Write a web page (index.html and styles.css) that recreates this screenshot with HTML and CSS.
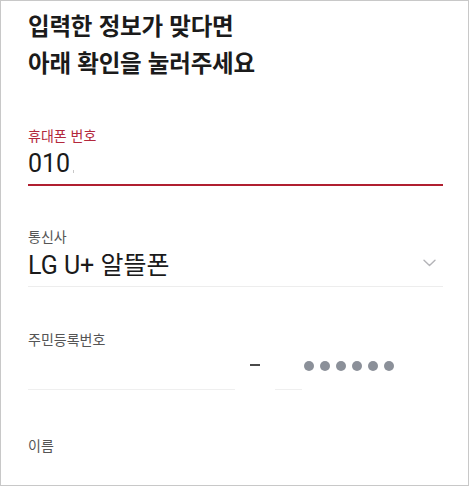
FILE: index.html
```html
<!DOCTYPE html>
<html lang="ko">
<head>
<meta charset="utf-8">
<link rel="stylesheet" href="styles.css">
</head>
<body>
<div class="page">
  <h1 class="title">입력한 정보가 맞다면<br>아래 확인을 눌러주세요</h1>

  <div class="field field-active">
    <div class="label label-active">휴대폰 번호</div>
    <div class="value-row row-active">
      <span class="value">010</span><span class="caret"></span>
    </div>
  </div>

  <div class="field field-carrier">
    <div class="label">통신사</div>
    <div class="value-row row-plain">
      <span class="value">LG U+ 알뜰폰</span>
      <svg class="chevron" width="13" height="8" viewBox="0 0 13 8"><path d="M1 1.2 L6.5 6.5 L12 1.2" fill="none" stroke="#b4b4b8" stroke-width="1.4" stroke-linecap="round" stroke-linejoin="round"/></svg>
    </div>
  </div>

  <div class="field field-rrn">
    <div class="label">주민등록번호</div>
    <div class="rrn-row">
      <div class="rrn-front"></div>
      <div class="rrn-dash"></div>
      <div class="rrn-back"></div>
      <div class="rrn-dots">
        <span class="dot"></span><span class="dot"></span><span class="dot"></span><span class="dot"></span><span class="dot"></span><span class="dot"></span>
      </div>
    </div>
  </div>

  <div class="field field-name">
    <div class="label">이름</div>
  </div>
</div>
</body>
</html>
```

FILE: styles.css
```css
html, body {
  margin: 0;
  padding: 0;
  background: #ffffff;
}

body {
  font-family: Roboto, "Noto Sans CJK KR", sans-serif;
  color: #1a1a1a;
}

.page {
  box-sizing: border-box;
  width: 469px;
  height: 486px;
  border: 1px solid #c8c8c8;
  padding: 6px 25px 0 27px;
  overflow: hidden;
}

.title {
  margin: 0;
  font-family: "Noto Sans CJK KR", sans-serif;
  font-size: 23.5px;
  font-weight: 700;
  line-height: 37px;
  letter-spacing: -0.2px;
  color: #1b1b1b;
}

.field-active { margin-top: 44px; }
.field-carrier { margin-top: 40px; }
.field-rrn { margin-top: 42px; }
.field-name { margin-top: 45px; }

.label {
  font-family: "Noto Sans CJK KR", sans-serif;
  font-size: 14px;
  line-height: 20px;
  color: #555555;
}

.label-active {
  color: #b3283c;
}

.value-row {
  display: flex;
  align-items: center;
  height: 30px;
  margin-top: 4px;
  padding-bottom: 5px;
}

.row-active {
  border-bottom: 2px solid #b01f30;
}

.row-plain {
  margin-top: 5px;
  border-bottom: 1px solid #ededed;
  justify-content: space-between;
}

.value {
  font-family: Roboto, "Noto Sans CJK KR", sans-serif;
  font-size: 25px;
  line-height: 30px;
  color: #1a1a1a;
}

.caret {
  width: 1px;
  height: 3px;
  margin-left: 3px;
  margin-top: 14px;
  background: #c8c8c8;
}

.chevron {
  margin-right: 7px;
  margin-top: -6px;
}

.rrn-row {
  display: flex;
  align-items: flex-start;
  height: 41px;
}

.rrn-front {
  width: 207px;
  height: 40px;
  border-bottom: 1px solid #efefef;
}

.rrn-dash {
  width: 10px;
  height: 2px;
  margin: 15px 15px 0 15px;
  background: #4a4a4a;
}

.rrn-back {
  width: 27px;
  height: 40px;
  border-bottom: 1px solid #efefef;
}

.rrn-dots {
  display: flex;
  gap: 6px;
  margin-top: 12px;
  margin-left: 2px;
}

.dot {
  width: 10px;
  height: 10px;
  border-radius: 50%;
  background: #8b9099;
}
```
